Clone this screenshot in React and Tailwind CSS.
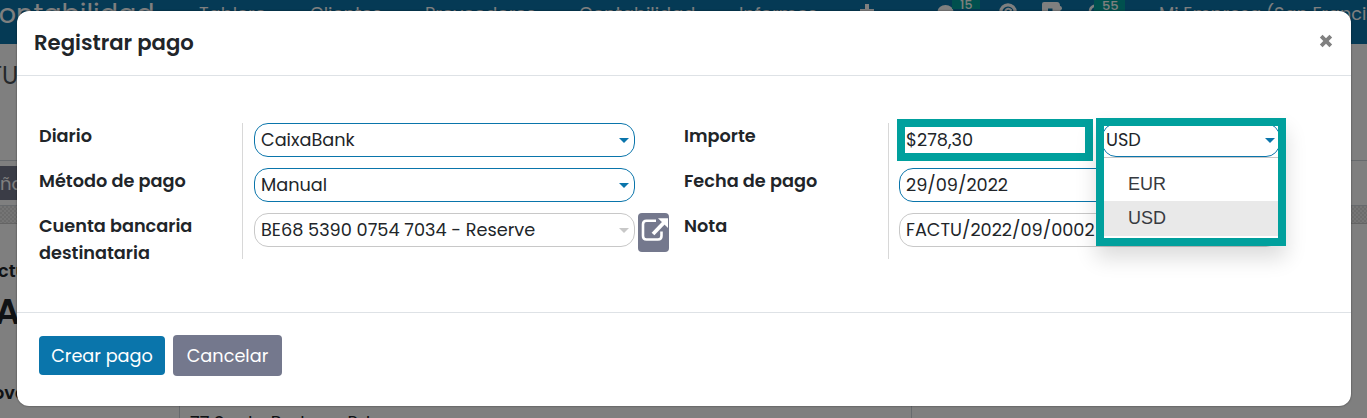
import React from "react";

function Caret({ className }) {
  return (
    <svg viewBox="0 0 10 5" className={`h-[5px] w-[10px] shrink-0 ${className}`}>
      <path d="M0 0H10L5 5Z" fill="currentColor" />
    </svg>
  );
}

function Field({ children, border = "border-[#0a75ab]", caret }) {
  return (
    <div className={`flex h-[34px] w-[381px] items-center justify-between rounded-[14px] border bg-white pr-[5px] pl-[6px] ${border}`}>
      <span className="pt-px text-[17.7px] whitespace-nowrap">{children}</span>
      {caret && <Caret className={caret} />}
    </div>
  );
}

function NavBar() {
  return (
    <nav className="flex h-[44px] shrink-0 items-start bg-[#0a75ab] text-[17.8px] leading-[27px] whitespace-nowrap text-white">
      <span className="-ml-[22px] w-[221px] shrink-0 text-[27px] leading-[27px]">Contabilidad</span>
      <span className="w-[111px] shrink-0">Tablero</span>
      <span className="w-[115px] shrink-0">Clientes</span>
      <span className="w-[154px] shrink-0">Proveedores</span>
      <span className="w-[160px] shrink-0">Contabilidad</span>
      <span className="w-[121px] shrink-0">Informes</span>
      <svg viewBox="0 0 14 14" className="mt-[4px] h-[14px] w-[14px] shrink-0">
        <path d="M5 0H9V5H14V9H9V14H5V9H0V5H5Z" fill="currentColor" />
      </svg>
      <svg viewBox="0 0 17 14" className="mt-[5px] ml-[63px] h-[14px] w-[17px] shrink-0">
        <ellipse cx="8.5" cy="6.5" rx="8" ry="6.5" fill="currentColor" />
      </svg>
      <span className="-mt-[7px] -ml-[2px] h-[16px] w-[28px] shrink-0 bg-[#00a09d] pl-[8px] text-[12.5px] leading-[24px] font-medium">15</span>
      <svg viewBox="0 0 18 18" className="mt-[3px] ml-[19px] h-[18px] w-[18px] shrink-0">
        <circle cx="9" cy="9" r="7.2" fill="none" stroke="currentColor" strokeWidth="3.2" />
        <path d="M6 8Q9 4 12 7Q12 9 9 11" fill="none" stroke="currentColor" strokeWidth="2" />
      </svg>
      <svg viewBox="0 0 20 18" className="mt-[2px] ml-[25px] h-[18px] w-[20px] shrink-0">
        <path d="M2 0H15Q18 0 18 4Q20 4 20 7L18 9V18H0V2Q0 0 2 0Z" fill="currentColor" />
        <path d="M6 6.5H10.5V9H6Z" fill="#0a75ab" />
      </svg>
      <svg viewBox="0 0 12 18" className="mt-[3px] ml-[23px] h-[18px] w-[10px] shrink-0">
        <path d="M11 1.5A8 8 0 0 0 11 16.5" fill="none" stroke="currentColor" strokeWidth="3" />
      </svg>
      <span className="-mt-[5px] -ml-[1px] h-[16px] w-[31px] shrink-0 bg-[#00a09d] pl-[8px] text-[13px] leading-[21px] font-medium">55</span>
      <span className="ml-[34px] text-[17.7px]">Mi Empresa (San Francisco)</span>
    </nav>
  );
}

function InvoicePage() {
  return (
    <div className="flex h-[418px] flex-col overflow-hidden bg-white">
      <NavBar />
      <div className="flex h-[117px] shrink-0 flex-col border-b border-[#ced4da] pt-[18px] text-[24px] text-[#495057]">
        <span className="-ml-[11px] leading-[27px]">TU</span>
      </div>
      <div className="flex h-[45px] shrink-0 items-start border-b border-[#ced4da] pt-[5px]">
        <span className="flex h-[34px] w-[60px] items-center bg-[#74788d] text-[18px] text-white">ñadir</span>
      </div>
      <div className="h-[18px] shrink-0 border-b border-[#c8c8c8] bg-[#e5e5e5] bg-[repeating-conic-gradient(#d8d8d8_0_25%,#ebebeb_0_50%)] bg-[length:4px_4px]" />
      <div className="flex shrink-0 flex-col pt-[34px] text-[17.7px] font-semibold text-[#212529]">
        <span className="-ml-[2px] leading-[26px]">ctura</span>
        <span className="mt-[6px] -ml-[5px] text-[35px] leading-[44px]">ACTU</span>
      </div>
      <div className="mt-[46px] flex h-[60px] shrink-0 items-start text-[17.7px] text-[#212529]">
        <span className="-ml-[7px] w-[186px] shrink-0 leading-[26px] font-semibold">oveedor</span>
        <span className="h-full w-[733px] shrink-0 border-x border-[#ced4da] pt-[30px] pl-[10px] leading-[26px]">77 Santa Barbara Rd</span>
      </div>
    </div>
  );
}

function CurrencyPicker() {
  return (
    <div className="absolute top-[-5px] left-[207px] h-[128px] w-[190px] border-8 border-[#00a09d] bg-white shadow-[0_12px_20px_0_rgba(0,0,0,0.14)]">
      <div className="flex h-[32px] overflow-hidden border-b border-[#c8c8c8]">
        <div className="-mt-[3px] -ml-[2px] flex h-[34px] w-[178px] shrink-0 items-center justify-between rounded-[14px] border border-[#0a75ab] pr-[4px] pl-[3px]">
          <span className="pt-px text-[17.7px]">USD</span>
          <Caret className="text-[#0a75ab]" />
        </div>
      </div>
      <div className="flex flex-col pt-[8px] font-['Liberation_Sans',sans-serif] text-[18px] text-[#373a40]">
        <span className="flex h-[35px] items-center pt-[2px] pl-[24px]">EUR</span>
        <span className="flex h-[35px] items-center bg-[#e9e9e9] pl-[24px]">USD</span>
      </div>
    </div>
  );
}

function PaymentDialog() {
  return (
    <div className="flex h-[395px] w-[1334px] flex-col rounded-[12px] bg-white shadow-[0_0_2px_rgba(0,0,0,0.55)]">
      <header className="flex h-[65px] shrink-0 items-start justify-between border-b border-[#dee2e6] pr-[17px] pl-[17px]">
        <h1 className="pt-[18px] text-[21.2px] leading-[28px] font-semibold">Registrar pago</h1>
        <svg viewBox="0 0 16 16" className="mt-[22px] h-[16px] w-[16px] text-[#808080]">
          <path d="M3.2 3.2L12.8 12.8M12.8 3.2L3.2 12.8" stroke="currentColor" strokeWidth="3.8" fill="none" />
        </svg>
      </header>
      <div className="flex h-[237px] shrink-0 items-start border-b border-[#dee2e6] pt-[47px] pl-[22px]">
        <div className="-mt-px flex w-[203px] shrink-0 flex-col text-[17.7px] leading-[27px] font-semibold">
          <span className="h-[45px]">Diario</span>
          <span className="h-[45px]">Método de pago</span>
          <span>Cuenta bancaria<br />destinataria</span>
        </div>
        <div className="flex h-[136px] w-[442px] shrink-0 flex-col gap-[11px] border-l border-[#d8d8d8] pl-[11px]">
          <Field caret="text-[#0a75ab]">CaixaBank</Field>
          <Field caret="text-[#0a75ab]">Manual</Field>
          <div className="flex items-start gap-[3px]">
            <Field caret="text-[#c8c8c8]" border="border-[#c8c8c8]">BE68 5390 0754 7034 - Reserve</Field>
            <button className="flex h-[39px] w-[31px] rounded-[4px] bg-[#74788d] pt-[5px] pl-[3px] text-white">
              <svg viewBox="0 0 27 23" className="h-[23px] w-[27px] shrink-0" fill="none" stroke="currentColor">
                <path d="M15 2.8H5.5Q2 2.8 2 6.3V18Q2 21.5 5.5 21.5H17Q20.5 21.5 20.5 18V13.5" strokeWidth="2.6" />
                <path d="M12 16L23 4.5" strokeWidth="3.8" />
                <path d="M17 0.2H27V10Z" fill="currentColor" stroke="none" />
              </svg>
            </button>
          </div>
        </div>
        <div className="-mt-px flex w-[204px] shrink-0 flex-col text-[17.7px] leading-[27px] font-semibold">
          <span className="h-[45px]">Importe</span>
          <span className="h-[45px]">Fecha de pago</span>
          <span>Nota</span>
        </div>
        <div className="relative flex h-[136px] w-[400px] shrink-0 flex-col gap-[11px] border-l border-[#d8d8d8] pl-[10px]">
          <div className="-mt-[4px] -ml-[2px] mb-[-4px] flex h-[42px] w-[196px] items-center border-8 border-[#00a09d] pt-px pl-px text-[17.7px]">$278,30</div>
          <Field>29/09/2022</Field>
          <Field border="border-[#c8c8c8]">FACTU/2022/09/0002</Field>
          <CurrencyPicker />
        </div>
      </div>
      <footer className="flex items-start gap-2 pt-[22px] pl-[22px] text-[17.7px] text-white">
        <button className="mt-px h-[39px] w-[126px] rounded-[4px] bg-[#0a75ab] pt-px whitespace-nowrap">Crear pago</button>
        <button className="h-[41px] w-[109px] rounded-[4px] bg-[#74788d] pt-px whitespace-nowrap">Cancelar</button>
      </footer>
    </div>
  );
}

export default function App() {
  return (
    <main className="relative h-[418px] w-[1367px] overflow-hidden font-[Poppins,Inter,sans-serif] text-[#212529]">
      <InvoicePage />
      <div className="absolute inset-0 flex bg-black/50 pt-[11px] pl-[17px]">
        <PaymentDialog />
      </div>
    </main>
  );
}
